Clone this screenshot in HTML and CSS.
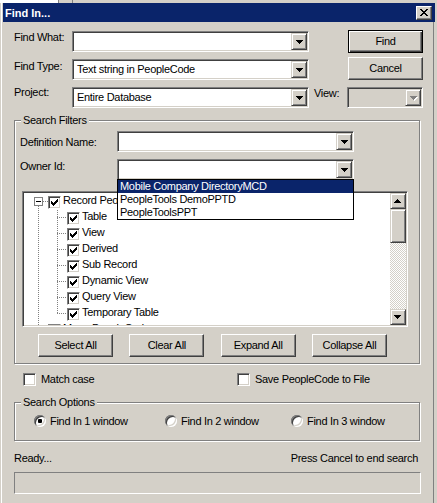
FILE: index.html
```html
<!DOCTYPE html>
<html lang="en">
  <head>
    <meta charset="UTF-8" />
    <meta name="viewport" content="width=device-width, initial-scale=1.0" />
    <title>Find In...</title>
    <link rel="stylesheet" href="styles.css">
  </head>
  <body>
    <div class="strip"></div>
    <div class="window">
      <div class="titlebar">
        <span class="title">Find In...</span>
        <span class="close-btn">
          <svg width="8" height="7" viewBox="0 0 8 7" shape-rendering="crispEdges">
            <path d="M0 0h2v1H0zM6 0h2v1H6zM1 1h2v1H1zM5 1h2v1H5zM2 2h4v1H2zM3 3h2v1H3zM2 4h4v1H2zM1 5h2v1H1zM5 5h2v1H5zM0 6h2v1H0zM6 6h2v1H6z" />
          </svg>
        </span>
      </div>

      <div class="dialog">
        <div class="top-grid">
          <span class="lbl lbl-what">Find What:</span>
          <div class="combo combo-what">
            <span class="combo-value"></span>
            <span class="drop-btn"><svg class="arrow" width="7" height="4" viewBox="0 0 7 4" shape-rendering="crispEdges"><path d="M0 0H7V1H6V2H5V3H4V4H3V3H2V2H1V1H0Z" /></svg></span>
          </div>
          <button class="btn btn-default btn-find">Find</button>

          <span class="lbl lbl-type">Find Type:</span>
          <div class="combo combo-type">
            <span class="combo-value">Text string in PeopleCode</span>
            <span class="drop-btn"><svg class="arrow" width="7" height="4" viewBox="0 0 7 4" shape-rendering="crispEdges"><path d="M0 0H7V1H6V2H5V3H4V4H3V3H2V2H1V1H0Z" /></svg></span>
          </div>
          <button class="btn btn-cancel">Cancel</button>

          <span class="lbl lbl-project">Project:</span>
          <div class="combo combo-project">
            <span class="combo-value">Entire Database</span>
            <span class="drop-btn"><svg class="arrow" width="7" height="4" viewBox="0 0 7 4" shape-rendering="crispEdges"><path d="M0 0H7V1H6V2H5V3H4V4H3V3H2V2H1V1H0Z" /></svg></span>
          </div>
          <span class="lbl lbl-view">View:</span>
          <div class="combo combo-view disabled">
            <span class="combo-value"></span>
            <span class="drop-btn"><svg class="arrow" width="8" height="5" viewBox="0 0 8 5" shape-rendering="crispEdges"><path fill="#fff" d="M1 1H8V2H7V3H6V4H5V5H4V4H3V3H2V2H1Z" /><path fill="#808080" d="M0 0H7V1H6V2H5V3H4V4H3V3H2V2H1V1H0Z" /></svg></span>
          </div>
        </div>

        <!-- Search Filters -->
        <div class="group group-filters">
          <span class="group-title">Search Filters</span>

          <div class="field-row">
            <span class="field-lbl lbl-defn">Definition Name:</span>
            <div class="combo">
              <span class="combo-value"></span>
              <span class="drop-btn"><svg class="arrow" width="7" height="4" viewBox="0 0 7 4" shape-rendering="crispEdges"><path d="M0 0H7V1H6V2H5V3H4V4H3V3H2V2H1V1H0Z" /></svg></span>
            </div>
          </div>

          <div class="field-row">
            <span class="field-lbl lbl-owner">Owner Id:</span>
            <div class="combo combo-owner">
              <span class="combo-value"></span>
              <span class="drop-btn"><svg class="arrow" width="7" height="4" viewBox="0 0 7 4" shape-rendering="crispEdges"><path d="M0 0H7V1H6V2H5V3H4V4H3V3H2V2H1V1H0Z" /></svg></span>

              <div class="dropdown-list">
                <div class="selected">Mobile Company DirectoryMCD</div>
                <div>PeopleTools DemoPPTD</div>
                <div>PeopleToolsPPT</div>
              </div>
            </div>
          </div>

          <div class="tree">
            <div class="tree-items">
              <div class="node node-root open">
                <span class="expander"></span>
                <span class="check on"><svg width="7" height="7" viewBox="0 0 7 7" shape-rendering="crispEdges"><path d="M0 2H1V3H2V4H3V3H4V2H5V1H6V0H7V3H6V4H5V5H4V6H3V7H2V6H1V5H0Z" /></svg></span>
                <span class="node-label">Record PeopleCode</span>
              </div>
              <div class="node node-leaf">
                <span class="check on"><svg width="7" height="7" viewBox="0 0 7 7" shape-rendering="crispEdges"><path d="M0 2H1V3H2V4H3V3H4V2H5V1H6V0H7V3H6V4H5V5H4V6H3V7H2V6H1V5H0Z" /></svg></span>
                <span class="node-label">Table</span>
              </div>
              <div class="node node-leaf">
                <span class="check on"><svg width="7" height="7" viewBox="0 0 7 7" shape-rendering="crispEdges"><path d="M0 2H1V3H2V4H3V3H4V2H5V1H6V0H7V3H6V4H5V5H4V6H3V7H2V6H1V5H0Z" /></svg></span>
                <span class="node-label">View</span>
              </div>
              <div class="node node-leaf">
                <span class="check on"><svg width="7" height="7" viewBox="0 0 7 7" shape-rendering="crispEdges"><path d="M0 2H1V3H2V4H3V3H4V2H5V1H6V0H7V3H6V4H5V5H4V6H3V7H2V6H1V5H0Z" /></svg></span>
                <span class="node-label">Derived</span>
              </div>
              <div class="node node-leaf">
                <span class="check on"><svg width="7" height="7" viewBox="0 0 7 7" shape-rendering="crispEdges"><path d="M0 2H1V3H2V4H3V3H4V2H5V1H6V0H7V3H6V4H5V5H4V6H3V7H2V6H1V5H0Z" /></svg></span>
                <span class="node-label">Sub Record</span>
              </div>
              <div class="node node-leaf">
                <span class="check on"><svg width="7" height="7" viewBox="0 0 7 7" shape-rendering="crispEdges"><path d="M0 2H1V3H2V4H3V3H4V2H5V1H6V0H7V3H6V4H5V5H4V6H3V7H2V6H1V5H0Z" /></svg></span>
                <span class="node-label">Dynamic View</span>
              </div>
              <div class="node node-leaf">
                <span class="check on"><svg width="7" height="7" viewBox="0 0 7 7" shape-rendering="crispEdges"><path d="M0 2H1V3H2V4H3V3H4V2H5V1H6V0H7V3H6V4H5V5H4V6H3V7H2V6H1V5H0Z" /></svg></span>
                <span class="node-label">Query View</span>
              </div>
              <div class="node node-leaf last">
                <span class="check on"><svg width="7" height="7" viewBox="0 0 7 7" shape-rendering="crispEdges"><path d="M0 2H1V3H2V4H3V3H4V2H5V1H6V0H7V3H6V4H5V5H4V6H3V7H2V6H1V5H0Z" /></svg></span>
                <span class="node-label">Temporary Table</span>
              </div>
              <div class="node node-root closed">
                <span class="expander"></span>
                <span class="check on"><svg width="7" height="7" viewBox="0 0 7 7" shape-rendering="crispEdges"><path d="M0 2H1V3H2V4H3V3H4V2H5V1H6V0H7V3H6V4H5V5H4V6H3V7H2V6H1V5H0Z" /></svg></span>
                <span class="node-label">Menu PeopleCode</span>
              </div>
            </div>

            <div class="scrollbar">
              <span class="sb-btn"><svg class="arrow" width="7" height="4" viewBox="0 0 7 4" shape-rendering="crispEdges"><path d="M3 0H4V1H5V2H6V3H7V4H0V3H1V2H2V1H3Z" /></svg></span>
              <span class="sb-thumb"></span>
              <span class="sb-track"></span>
              <span class="sb-btn"><svg class="arrow" width="7" height="4" viewBox="0 0 7 4" shape-rendering="crispEdges"><path d="M0 0H7V1H6V2H5V3H4V4H3V3H2V2H1V1H0Z" /></svg></span>
            </div>
          </div>

          <div class="tree-buttons">
            <button class="btn">Select All</button>
            <button class="btn">Clear All</button>
            <button class="btn">Expand All</button>
            <button class="btn">Collapse All</button>
          </div>
        </div>

        <div class="options-row">
          <span class="opt opt-match"><span class="box"></span><span class="opt-label">Match case</span></span>
          <span class="opt"><span class="box"></span><span class="opt-label">Save PeopleCode to File</span></span>
        </div>

        <!-- Search Options -->
        <div class="group group-options">
          <span class="group-title">Search Options</span>
          <div class="radio-row">
            <span class="radio-item radio-1"><span class="radio on"></span><span class="opt-label">Find In 1 window</span></span>
            <span class="radio-item radio-2"><span class="radio"></span><span class="opt-label">Find In 2 window</span></span>
            <span class="radio-item"><span class="radio"></span><span class="opt-label">Find In 3 window</span></span>
          </div>
        </div>

        <div class="status-row">
          <span>Ready...</span>
          <span>Press Cancel to end search</span>
        </div>

        <div class="progress"></div>
      </div>
    </div>
  </body>
</html>
```

FILE: styles.css
```css
* {
  box-sizing: border-box;
}

body {
  margin: 0;
  width: 437px;
  height: 503px;
  overflow: hidden;
  background: #d4d0c8;
  color: #000;
  font-family: "Liberation Sans", Arial, sans-serif;
  font-size: 11px;
  line-height: 13px;
  letter-spacing: -0.3px;
}

button {
  font: inherit;
  letter-spacing: inherit;
  color: inherit;
  margin: 0;
}

svg {
  display: block;
}

/* strip of whatever sits behind the window */
.strip {
  height: 3px;
  background: linear-gradient(
    to right,
    #fff 0 58px,
    #808080 58px 59px,
    #d4d0c8 59px 72px,
    #808080 72px 73px,
    #d4d0c8 73px
  );
}

.window {
  height: 500px;
  margin-left: 1px;
  padding-left: 1px;
  border-left: 1px solid #fff;
}

/* caption */
.titlebar {
  display: flex;
  align-items: center;
  justify-content: space-between;
  width: 432px;
  height: 19px;
  padding: 0 3px 0 2px;
  background: #0a246a;
  color: #fff;
}

.title {
  font-weight: bold;
  letter-spacing: 0;
  margin-top: 2px;
}

.close-btn {
  display: flex;
  align-items: center;
  justify-content: center;
  width: 16px;
  height: 14px;
  background: #d4d0c8;
  border: 1px solid;
  border-color: #fff #404040 #404040 #fff;
  box-shadow: inset -1px -1px #808080;
}

.dialog {
  width: 431px;
  height: 481px;
  padding: 8px 13px 0 11px;
  border-right: 1px solid #808080;
}

/* sunken combo box */
.combo {
  position: relative;
  display: flex;
  width: 237px;
  height: 21px;
  padding: 1px;
  background: #fff;
  border: 1px solid;
  border-color: #808080 #fff #fff #808080;
  box-shadow: inset 1px 1px #404040, inset -1px -1px #d4d0c8;
}

.combo.disabled {
  background: #d4d0c8;
}

.combo-value {
  flex: 1;
  padding-left: 3px;
  line-height: 17px;
  white-space: nowrap;
}

.drop-btn {
  width: 16px;
  height: 17px;
  background: #d4d0c8;
  border: 1px solid;
  border-color: #d4d0c8 #404040 #404040 #d4d0c8;
  box-shadow: inset 1px 1px #fff, inset -1px -1px #808080;
}

.drop-btn .arrow {
  margin: 6px 0 0 4px;
}

.dropdown-list {
  position: absolute;
  top: 19px;
  left: -1px;
  z-index: 2;
  width: 237px;
  background: #fff;
  border: 1px solid #000;
}

.dropdown-list div {
  height: 13px;
  padding-left: 2px;
  white-space: nowrap;
}

.dropdown-list .selected {
  background: #0a246a;
  color: #fff;
}

/* top block: find what / type / project */
.top-grid {
  display: grid;
  grid-template-columns: 58px 237px 38px 76px;
  grid-template-rows: 27px 28px 23px;
  align-items: start;
}

.lbl-what {
  margin-top: 1px;
}

.lbl-type {
  margin-top: 3px;
}

.lbl-project {
  margin-top: 1px;
}

.lbl-view {
  grid-column: 3;
  margin-top: 2px;
  padding-left: 5px;
}

.combo-what {
  margin-top: 1px;
}

.combo-type,
.combo-project {
  margin-top: 2px;
}

.combo.combo-view {
  grid-column: 4;
  width: 76px;
  margin-top: 2px;
}

.btn-find,
.btn-cancel {
  grid-column: 4;
  width: 75px;
  margin-left: 1px;
}

/* push buttons */
.btn {
  height: 23px;
  padding: 0 0 1px;
  background: #d4d0c8;
  border: 1px solid;
  border-color: #fff #404040 #404040 #fff;
  box-shadow: inset -1px -1px #808080;
  text-align: center;
}

.btn-default {
  border-color: #000;
  box-shadow: inset 1px 1px #fff, inset -1px -1px #404040, inset -2px -2px #808080;
}

/* etched group box */
.group {
  position: relative;
  border: 1px solid #808080;
  box-shadow: inset 1px 1px #fff, 1px 1px #fff;
}

.group-title {
  position: absolute;
  top: -7px;
  left: 6px;
  padding: 0 2px;
  background: #d4d0c8;
}

.group-filters {
  margin-top: 12px;
  padding: 10px 0 6px 5px;
}

.field-row {
  display: flex;
  align-items: flex-start;
}

.field-row + .field-row {
  margin-top: 7px;
}

.field-lbl {
  width: 97px;
}

.lbl-defn {
  margin-top: 5px;
}

.lbl-owner {
  margin-top: 1px;
}

/* tree view */
.tree {
  display: flex;
  width: 386px;
  height: 136px;
  margin: 11px 0 0 2px;
  padding: 1px;
  border: 1px solid;
  border-color: #808080 #fff #fff #808080;
  box-shadow: inset 1px 1px #404040, inset -1px -1px #d4d0c8;
}

.tree-items {
  flex: 1;
  overflow: hidden;
  padding-top: 1px;
  background: #fff;
}

.node {
  display: flex;
  align-items: flex-start;
  height: 16px;
  white-space: nowrap;
  background-repeat: no-repeat;
}

.node .check {
  margin-top: 2px;
}

.node-label {
  margin-left: 2px;
}

.node-root {
  padding-left: 10px;
}

.node-root.open {
  background-image:
    repeating-linear-gradient(#808080 0 1px, transparent 1px 2px),
    repeating-linear-gradient(to right, #808080 0 1px, transparent 1px 2px);
  background-size: 1px 4px, 5px 1px;
  background-position: 14px 12px, 19px 7px;
}

.node-root.closed {
  background-image:
    repeating-linear-gradient(#808080 0 1px, transparent 1px 2px),
    repeating-linear-gradient(to right, #808080 0 1px, transparent 1px 2px);
  background-size: 1px 3px, 5px 1px;
  background-position: 14px 0, 19px 7px;
}

.expander {
  width: 9px;
  height: 9px;
  margin: 3px 5px 0 0;
  border: 1px solid #808080;
  background:
    linear-gradient(#000, #000) 1px 3px / 5px 1px no-repeat,
    #fff;
}

.closed .expander {
  background:
    linear-gradient(#000, #000) 1px 3px / 5px 1px no-repeat,
    linear-gradient(#000, #000) 3px 1px / 1px 5px no-repeat,
    #fff;
}

.node-leaf {
  padding-left: 43px;
  background-image:
    repeating-linear-gradient(#808080 0 1px, transparent 1px 2px),
    repeating-linear-gradient(#808080 0 1px, transparent 1px 2px),
    repeating-linear-gradient(to right, #808080 0 1px, transparent 1px 2px);
  background-size: 1px 16px, 1px 16px, 10px 1px;
  background-position: 14px 0, 33px 0, 33px 7px;
}

.node-leaf.last {
  background-size: 1px 16px, 1px 8px, 10px 1px;
}

/* sunken check box */
.check,
.box {
  display: flex;
  align-items: center;
  justify-content: center;
  flex: none;
  width: 13px;
  height: 13px;
  background: #fff;
  border: 1px solid;
  border-color: #808080 #fff #fff #808080;
  box-shadow: inset 1px 1px #404040, inset -1px -1px #d4d0c8;
}

/* scroll bar */
.scrollbar {
  display: flex;
  flex-direction: column;
  width: 16px;
  background: repeating-conic-gradient(#d4d0c8 0 25%, #fff 0 50%) 0 0 / 2px 2px;
}

.sb-btn,
.sb-thumb {
  background: #d4d0c8;
  border: 1px solid;
  border-color: #d4d0c8 #404040 #404040 #d4d0c8;
  box-shadow: inset 1px 1px #fff, inset -1px -1px #808080;
}

.sb-btn {
  height: 16px;
}

.sb-btn .arrow {
  margin: 5px 0 0 3px;
}

.sb-thumb {
  height: 34px;
}

.sb-track {
  flex: 1;
}

.tree-buttons {
  display: flex;
  justify-content: space-between;
  width: 349px;
  margin: 7px 0 0 18px;
}

.tree-buttons .btn {
  width: 75px;
}

/* check boxes under the filters */
.options-row {
  display: flex;
  align-items: center;
  height: 13px;
  margin-top: 9px;
  padding-left: 9px;
}

.opt,
.radio-item {
  display: flex;
  align-items: center;
}

.opt-match {
  width: 214px;
}

.opt .opt-label {
  margin-left: 5px;
}

.group-options {
  margin-top: 16px;
  padding: 12px 0 13px 19px;
}

.radio-row {
  display: flex;
  align-items: center;
  height: 12px;
}

.radio-1 {
  width: 131px;
}

.radio-2 {
  width: 126px;
}

.radio-item .opt-label {
  margin-left: 4px;
}

.radio {
  width: 12px;
  height: 12px;
  border-radius: 50%;
  background: #fff;
  box-shadow:
    inset 1px 1px #808080,
    inset -1px -1px #fff,
    inset 2px 2px #404040,
    inset -2px -2px #d4d0c8;
}

.radio.on {
  background: radial-gradient(circle, #000 0 2px, #fff 2.5px);
}

.status-row {
  display: flex;
  justify-content: space-between;
  margin-top: 11px;
  padding-right: 2px;
}

.progress {
  width: 407px;
  height: 22px;
  margin-top: 7px;
  border: 1px solid;
  border-color: #808080 #fff #fff #808080;
}
```
